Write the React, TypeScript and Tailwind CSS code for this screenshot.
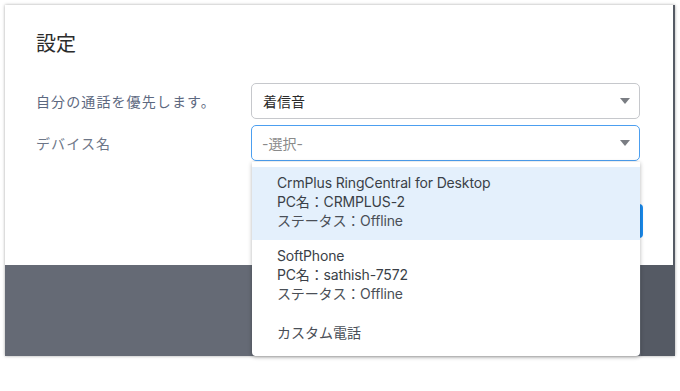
const font = { fontFamily: "Inter, 'Noto Sans CJK JP', sans-serif" };

function Caret() {
  return (
    <svg width="10" height="6" viewBox="0 0 10 6" className="text-[#7a7d83]">
      <path d="M0 0 L10 0 L5 6 Z" fill="currentColor" />
    </svg>
  );
}

const devices = [
  { name: "CrmPlus RingCentral for Desktop", pc: "CRMPLUS-2", status: "Offline", active: true },
  { name: "SoftPhone", pc: "sathish-7572", status: "Offline", active: false },
];

export default function App() {
  return (
    <div className="w-[680px] h-[391px] bg-white pt-[5px] pl-[5px]" style={font}>
      <div className="relative w-[670px] h-[351px] flex flex-col shadow-[0_0_3px_rgba(0,0,0,0.35)] border-r-2 border-[#555a64]">
        {/* dialog */}
        <div className="relative h-[260px] bg-white rounded-bl-[4px] px-[31px] pt-[26px]">
          <h2 className="text-[20px] leading-[26px] text-[#2b2b2b]">設定</h2>

          <div className="mt-[26px] flex flex-col gap-[6px]">
            <div className="flex items-center">
              <div className="w-[215px] text-[14px] tracking-[1.1px] text-[#5c6880]">自分の通話を優先します。</div>
              <div className="w-[389px] h-[36px] border border-[#c6c8cc] rounded-[5px] flex items-center justify-between pl-[11px] pr-[9px]">
                <span className="text-[14px] text-[#2a2a2a]">着信音</span>
                <Caret />
              </div>
            </div>
            <div className="flex items-center">
              <div className="w-[215px] text-[14px] tracking-[1.1px] text-[#6d7688]">デバイス名</div>
              <div className="w-[389px] h-[36px] border border-[#4c9ff0] rounded-[5px] flex items-center justify-between pl-[10px] pr-[9px]">
                <span className="text-[14px] text-[#8a8a8a]">-選択-</span>
                <Caret />
              </div>
            </div>
          </div>

          {/* save button partly hidden behind the menu */}
          <div className="absolute left-[555px] top-[199px] w-[83px] h-[34px] rounded-[4px] bg-[#1a8cf0]" />
        </div>

        {/* backdrop below dialog */}
        <div className="flex-1 flex">
          <div className="flex-1 bg-[#656a75]" />
          <div className="w-[32px] -mt-[7px] bg-[#555a64]" />
        </div>

        {/* open menu */}
        <div className="absolute left-[247px] top-[157px] w-[388px] h-[194px] bg-white rounded-b-[4px] shadow-[0_1px_4px_rgba(0,0,0,0.3)] pt-[5px]">
          {devices.map((d) => (
            <div
              key={d.name}
              className={`h-[73px] pl-[25px] pt-[6px] text-[14px] leading-[19px] tracking-[-0.15px] text-[#3a3f47] ${
                d.active ? "bg-[#e4f0fc]" : ""
              }`}
            >
              <div>{d.name}</div>
              <div>PC名：{d.pc}</div>
              <div className="text-[#4a4f57]">ステータス：{d.status}</div>
            </div>
          ))}
          <div className="pl-[25px] pt-[10px] text-[14px] leading-[19px] text-[#4a4f57]">カスタム電話</div>
        </div>
      </div>
    </div>
  );
}
